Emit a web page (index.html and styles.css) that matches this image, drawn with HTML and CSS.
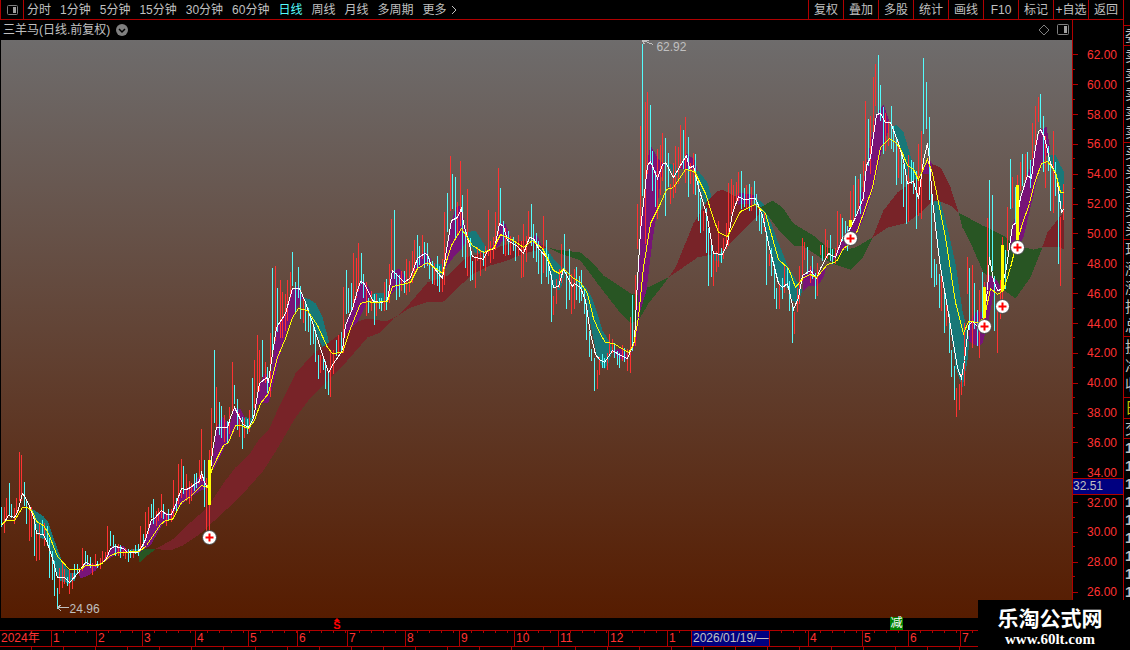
FILE: index.html
```html
<!DOCTYPE html>
<html lang="zh-CN">
    <head>
        <meta charset="utf-8">
        <title>三羊马 日线</title>
        <link rel="stylesheet" href="styles.css">
    </head>
    <body>
        <div class="main">
            <div class="workspace">
                <nav class="toolbar">
                    <button class="panel-toggle" aria-label="侧栏">
                        <svg width="13" height="12" viewBox="0 0 13 12"><rect x="1.5" y="1.5" width="10" height="9" rx="1" fill="none" stroke="#808080"/><rect x="7" y="3" width="3" height="6" fill="#a0a0a0"/></svg>
                    </button>
                    <div class="periods">
                        <button>分时</button>
                        <button>1分钟</button>
                        <button>5分钟</button>
                        <button>15分钟</button>
                        <button>30分钟</button>
                        <button>60分钟</button>
                        <button class="active">日线</button>
                        <button>周线</button>
                        <button>月线</button>
                        <button>多周期</button>
                        <button class="more">更多<svg width="6" height="10" viewBox="0 0 6 10"><path d="M1 1L5 5L1 9" fill="none" stroke="#c0c0c0"/></svg></button>
                    </div>
                    <div class="tools">
                        <button>复权</button>
                        <button>叠加</button>
                        <button>多股</button>
                        <button>统计</button>
                        <button>画线</button>
                        <button>F10</button>
                        <button>标记</button>
                        <button>+自选</button>
                        <button>返回</button>
                    </div>
                </nav>
                <div class="content">
                    <div class="chart">
                        <div class="chart-title">
                            <span>三羊马(日线.前复权)</span>
                            <button aria-label="展开">
                                <svg width="12" height="12" viewBox="0 0 12 12"><circle cx="6" cy="6" r="6" fill="#808080"/><path d="M3 5L6 8L9 5" fill="none" stroke="#000" stroke-width="1.5"/></svg>
                            </button>
                            <div class="chart-icons">
                                <button aria-label="标注">
                                    <svg width="12" height="12" viewBox="0 0 12 12"><path d="M6 1L11 6L6 11L1 6Z" fill="none" stroke="#808080"/></svg>
                                </button>
                                <button aria-label="右侧栏">
                                    <svg width="13" height="12" viewBox="0 0 13 12"><rect x="1.5" y="0.5" width="11" height="10" rx="1" fill="none" stroke="#808080"/><rect x="8" y="2" width="3" height="7" fill="#a0a0a0"/></svg>
                                </button>
                            </div>
                        </div>
                        <div class="plot">
                            <svg class="kline" viewBox="0.5 39.5 1071 578" preserveAspectRatio="none">
                                <!-- short trend, falling -->
                                <g class="teal">
                                    <path d="M31 508L43 516L48 522L54 540L62 562L70 572L77 572L74 580L68 583L60 580L56 575L49 548L46 540L39 537L34 522Z"/>
                                    <path d="M130 549L138 548V552H130ZM241 415L249 418L254 416L250 428L245 428Z"/>
                                    <path d="M303 297L309 299L315 303L322 317L329 343L322 347L313 325Z"/>
                                    <path d="M371 294L376 292L384 293L386 300L380 303L372 302Z"/>
                                    <path d="M430 264L440 263L444 266L442 275L434 268Z"/>
                                    <path d="M465 232L475 230L480 238L487 249L483 252L474 252L468 240Z"/>
                                    <path d="M536 243L546 248L553 258L560 266L565 268L562 283L559 290L552 287L546 260Z"/>
                                    <path d="M572 275L585 286L591 296L597 313L602 330L610 343L612 350L608 363L604 369L597 358L590 323L585 293Z"/>
                                    <path d="M668 163L674 165L679 172L674 177ZM696 168L707 182L712 200L707 210L700 190Z"/>
                                    <path d="M711 252L722 252L720 261L714 260Z"/>
                                    <path d="M756 198L763 203L767 213L777 240L788 267L802 290L797 305L792 300L787 285L780 290L767 240Z"/>
                                    <path d="M892 127L896 124L903 132L910 155L918 180L913 183L907 175L900 150Z"/>
                                    <path d="M1047 154L1055 154L1060 165L1063 170V202L1060 210L1055 173Z"/>
                                </g>
                                <!-- long trend band -->
                                <g class="green">
                                    <path d="M138 548H156L147 555L139 562Z"/>
                                    <path d="M547 247L555 249L580 252L593 263L603 275L630 293L638 295L647 287L668 277L660 288L648 303L638 320L630 323L618 310L597 283L580 260L560 253Z"/>
                                    <path d="M760 207L772 200L782 207L793 223L813 235L827 247L840 250L855 247L872 237L862 258L850 269L837 265L820 257L803 246L793 245L780 232L765 212Z"/>
                                    <path d="M958 212L982 225L1003 235L1015 245L1033 249L1042 247L1030 277L1015 298L1000 287L983 272L972 247L962 227Z"/>
                                </g>
                                <g class="maroon">
                                    <path d="M156 548L172 539L190 522L206 508L225 480L235 467L249 454L259 438L268 430L280 403L295 373L313 353L327 343L340 333L353 322L367 318L385 321L397 315L410 302L427 282L447 275L465 257L480 253L500 246L520 240L533 241L547 247L523 253L507 260L490 265L473 273L462 283L443 301L425 302L410 307L393 318L380 332L367 337L347 360L327 380L310 397L295 417L277 448L263 470L248 487L227 508L200 533L182 545L172 549L160 549Z"/>
                                    <path d="M668 277L675 267L693 223L707 200L716 191L722 189L737 197L747 203L760 207V212L740 233L720 252L697 257Z"/>
                                    <path d="M872 237L883 210L897 192L920 175L928 162L940 167L950 187L958 212L950 205L937 200L930 202L920 212L907 222L887 227Z"/>
                                    <path d="M1042 246L1047 232L1058 218L1063 212V249L1057 246Z"/>
                                </g>
                                <path class="teal" d="M933 200L940 202L947 227L955 263L962 310L969 340L967 360L962 387L955 367L948 313L940 267Z"/>
                                <!-- short trend, rising -->
                                <g class="purple">
                                    <path d="M78 572L85 562L95 564L101 562L95 570L88 575L80 578Z"/>
                                    <path d="M101 562L108 552L112 545L122 545L128 551L115 554L106 560Z"/>
                                    <path d="M138 553L145 540L152 518L161 510L170 514L178 495L185 488L192 485L201 472L209 487L200 490L186 500L176 508L170 519L162 524L150 545L144 548Z"/>
                                    <path d="M211 470L216 427L222 416L229 425L234 407L240 409L244 417L236 426L229 440L224 447L214 468Z"/>
                                    <path d="M253 420L259 383L265 372L270 381L276 327L285 313L292 288L298 285L303 297L295 310L288 325L282 345L275 375L268 402L262 402L257 404Z"/>
                                    <path d="M340 350L343 345L346 320L352 307L360 280L366 283L371 292L365 305L358 320L346 333Z"/>
                                    <path d="M386 298L391 271L399 268L402 272L407 280L403 283L395 290Z"/>
                                    <path d="M408 282L416 260L424 250L430 258V264L421 266L413 272Z"/>
                                    <path d="M444 268L450 225L455 207L460 205L464 222L467 237L462 247L455 254L446 266Z"/>
                                    <path d="M490 248L495 240L500 222L505 224L509 233L509 241L503 239L498 246ZM529 243L536 233L541 245Z"/>
                                    <path d="M612 350L620 348L628 355L625 360L617 357Z"/>
                                    <path d="M630 358L636 330L640 235L647 160L650 145L657 157L664 165L660 180L657 207L652 240L646 290L640 310L636 340L632 352Z"/>
                                    <path d="M680 168L686 153L695 160L697 170L688 168ZM736 197L738 192L756 195L750 203L738 204Z"/>
                                    <path d="M802 292L803 275L812 265L816 277L827 263L823 277L817 285L808 285Z"/>
                                    <path d="M830 262L842 237L857 213L865 170L875 115L883 104L888 118V130L882 147L873 187L865 213L855 237L840 253Z"/>
                                    <path d="M922 173L927 157L931 162L931 173Z"/>
                                    <path d="M968 340L969 322L977 310L983 313L987 273L997 280L1000 287L993 295L988 320L982 343L977 346L972 343Z"/>
                                    <path d="M1008 250L1013 222L1028 172L1033 153L1040 129L1046 126L1050 150L1045 157L1037 177L1030 207L1023 237L1017 247Z"/>
                                </g>
                                <path class="up" d="M4 506V532M6 497V517M14 507V523M16 497V513M19 451V500M21 454V500M29 506V540M31 506V536M36 530V560M39 523V559M44 522V545M59 567V593M62 560V587M64 568V583M69 568V593M72 572V588M79 567V573M82 547V570M92 562V574M95 553V566M100 557V568M102 550V563M105 551V560M107 525V557M118 543V555M123 549V555M125 547V558M133 548V557M140 525V547M145 511V540M148 506V533M156 510V525M158 507V520M161 493V517M166 512V525M171 508V521M173 479V517M178 463V503M181 458V497M186 473V500M189 480V503M191 482V500M199 459V483M201 428V480M206 477V530M209 449V530M211 407V460
                                    M216 386V427M224 414V441M229 406V433M232 361V413M239 412V436M244 417V437M249 409V431M254 359V407M257 334V393M259 349V390M265 361V382M270 332V396M275 265V340M280 279V337M282 291V337M285 293V330M287 279V320M290 271V297M303 297V322M320 354V372M330 349V396M333 349V373M338 334V353M343 286V352M353 252V307M356 257V297M358 242V290M366 281V315M371 290V310M376 293V315M384 281V310M389 263V302M391 218V270M401 270V290M406 258V294M409 260V291M412 250V282M414 239V273M422 234V258M434 262V284M442 258V291M444 211V284M450 155V210M457 201V233M460 160V225M467 188V275
                                    M475 255V287M477 246V260M480 250V275M485 245V270M488 209V255M490 240V262M493 236V258M495 211V249M498 167V233M505 227V255M510 235V254M518 234V255M521 240V277M523 223V276M526 235V261M528 210V240M543 215V272M553 295V314M556 278V303M559 268V287M561 243V282M571 273V313M574 268V308M597 369V388M599 356V374M607 352V369M609 333V353M612 338V352M622 344V360M627 348V370M630 316V372M635 274V345M637 203V248M640 125V227M645 101V243M647 91V173M657 148V218M660 144V194M662 132V180M670 183V203M673 162V197M675 145V192M678 146V183M680 124V167M685 116V182M690 162V183M693 152V193M703 210V230M713 250V285M716 250V271M718 220V266M723 237V258M726 222V248M728 182V245M731 178V213M733 184V210M736 181V203M738 171V200M746 184V207M751 186V210M764 212V230M769 253V265M779 282V308
                                    M784 265V292M794 311V333M797 287V311M799 265V303M802 237V280M804 241V259M810 265V282M817 262V295M820 244V254M825 228V257M827 239V258M835 247V263M837 210V252M840 213V243M850 190V220M853 184V220M858 178V210M863 160V200M865 100V170M870 115V173M873 76V137M875 63V105M885 112V150M888 120V145M898 140V177M908 154V221M918 143V215M921 130V218M941 274V310M946 303V325M956 387V416M959 383V409M961 373V394M964 322V385M967 256V293M972 264V347M979 289V357M984 281V320M987 217V287M997 300V352M1000 279V318M1002 236V300M1007 206V250M1012 176V207M1017 174V184M1020 161V190M1025 153V180M1032 122V158M1035 105V147M1038 96V121M1045 135V187M1053 130V212M1060 216V285M1063 183V219"/>
                                <path class="down" d="M1 506V526M9 482V515M11 503V517M24 481V505M26 500V523M34 515V555M42 519V533M47 525V545M49 537V577M52 550V579M54 560V595M57 587V608M67 576V585M74 563V578M77 563V572M85 550V563M87 554V564M90 556V567M97 560V567M110 530V545M113 534V547M115 543V555M120 544V557M128 548V561M130 549V557M135 544V553M138 543V555M143 533V545M151 503V517M153 498V523M163 503V518M168 508V520M176 497V510M183 465V493M194 473V490M196 472V487M204 459V506
                                    M214 349V422M219 401V434M221 405V437M227 420V442M234 384V403M237 398V429M242 416V448M247 418V433M252 377V417M262 339V376M267 366V392M272 267V353M277 287V331M292 251V285M295 281V313M298 266V297M300 285V318M305 300V330M308 307V331M310 315V344M313 323V343M315 333V361M318 354V378M323 356V369M325 360V388M328 370V394M336 339V355M341 331V352M346 269V313M348 287V312M351 282V310M361 252V283M363 273V297M368 297V312M374 293V324M379 297V308M381 297V310M386 278V309M394 209V278M396 272V299M399 274V296M404 270V292M417 234V267M419 245V264M424 241V267M427 242V265M429 257V278M432 260V283M437 255V285M439 265V291M447 192V231M452 173V208M455 176V238M462 194V256M465 228V267
                                    M470 237V280M472 260V279M483 250V265M500 187V223M503 220V253M508 230V254M513 236V250M515 240V260M531 203V245M533 223V257M536 232V261M538 240V273M541 252V283M546 239V276M548 253V283M551 273V321M564 233V272M566 270V308M569 248V299M576 266V299M579 275V302M581 269V300M584 287V313M586 302V339M589 330V356M591 348V360M594 357V390M602 353V367M604 357V367M614 342V357M617 350V364M619 352V367M624 347V361M632 294V350M642 43V195M650 104V163M652 150V190M655 170V206M665 137V215M668 152V186M683 129V168M688 136V196M695 153V194M698 180V220M700 197V232M706 207V252M708 227V285M711 243V276M721 247V262M741 170V208M744 187V206M749 183V210M754 180V203M756 193V220M759 207V230M761 212V233M766 230V284M771 247V275M774 263V298M776 287V308
                                    M782 277V298M787 267V287M789 280V310M792 303V342M807 246V273M812 255V278M815 272V298M822 244V260M830 234V260M832 248V263M842 217V240M845 220V233M847 225V250M855 175V215M860 173V213M868 118V165M878 54V112M880 84V120M883 106V153M891 105V148M893 125V151M896 137V184M901 150V183M903 163V206M906 180V223M911 159V183M913 161V193M916 170V228M923 57V133M926 81V128M929 116V199M931 192V277M934 258V286M936 263V284M939 273V307M944 293V332M949 313V352M951 349V376M954 365V399M969 267V329M974 282V328M977 309V345M982 271V317M989 179V263M992 194V270M994 275V330M1005 249V288M1010 158V208M1015 186V223M1022 153V185M1027 151V175M1030 159V187M1040 93V127M1043 115V171M1048 145V170M1050 160V210M1055 161V195M1058 187V263"/>
                                <polyline class="fast" points="1,525 5,520 8,515 14,517 17,512 22,493 25,497 30,508 34,520 36,533 43,534 47,543 52,558 57,577 64,577 69,582 78,572 85,562 92,565 100,564 106,558 110,548 115,546 123,548 127,552 137,552 141,547 145,539 151,519 154,518 161,510 166,514 171,514 176,502 181,488 186,489 190,487 195,483 199,481 201,472 204,482 207,487 209,481 212,450 216,427 227,427 230,417 234,407 239,417 243,424 248,427 253,418 259,383 266,377 268,381 272,353 276,327 285,313 292,288 299,288 305,302 313,325 320,348 328,372 333,363 342,350 345,325 352,308 357,290 360,281 363,282 373,301 381,302 387,300 392,270 397,275 404,282 410,277 417,258 424,253 427,254 430,263 442,278 444,263 447,243 451,220 457,217 461,208 463,223 467,237 472,256 483,259 487,250 494,248 499,223 503,226 507,240 517,246 523,253 529,237 533,238 538,248 547,258 553,287 558,286 563,269 572,286 574,283 580,287 585,300 590,333 595,354 599,359 604,362 612,350 620,355 627,358 634,340 637,280 640,230 644,193 647,165 650,161 657,178 662,164 665,162 673,177 680,165 686,155 689,168 693,165 697,183 707,217 713,253 722,254 727,243 732,213 738,196 743,199 755,198 762,215 768,243 778,283 782,287 787,283 793,309 798,297 802,275 810,270 816,278 820,268 828,253 835,257 842,237 847,233 855,217 863,197 866,165 870,157 873,135 876,114 880,113 885,122 890,122 897,140 903,160 907,183 913,181 918,198 923,160 927,143 929,160 932,200 939,260 944,290 950,325 957,367 961,378 964,360 968,325 972,321 978,327 982,324 987,290 989,257 993,280 997,290 1001,289 1006,267 1012,225 1016,222 1020,197 1027,175 1031,178 1034,153 1038,131 1040,129 1044,137 1050,163 1056,175 1061,212 1063,209"/>
                                <polyline class="slow" points="1,524 6,520 14,520 22,507 27,507 32,511 36,521 43,525 48,533 57,556 69,569 80,569 85,565 97,565 103,562 110,555 118,552 139,551 146,545 160,524 165,520 172,519 181,502 190,496 201,485 207,487 211,470 217,457 223,445 228,442 235,425 240,425 248,428 254,420 260,403 268,393 277,357 285,338 292,317 298,308 307,310 317,325 327,347 332,353 342,352 350,328 360,303 367,301 373,302 387,301 392,286 410,282 417,268 427,262 442,273 451,245 461,228 472,245 483,252 493,248 500,234 513,240 523,247 532,240 542,248 553,270 559,273 563,268 572,277 580,282 587,293 593,318 599,332 605,342 613,343 628,352 633,345 638,317 643,267 650,223 660,203 666,189 673,187 685,169 694,171 705,193 712,215 718,232 727,236 740,211 755,204 765,213 778,259 788,268 795,287 803,277 810,274 816,277 827,264 836,261 843,248 850,243 857,230 865,207 872,187 880,147 889,138 895,142 900,148 907,165 913,169 918,179 927,159 932,173 937,197 945,237 955,302 963,333 968,321 978,322 984,317 990,288 997,294 1003,290 1010,267 1016,243 1022,223 1029,203 1034,183 1041,163 1047,161 1055,172 1060,192 1063,192"/>
                                <path class="breakout" d="M209 459V504M850 219V226M984 286V317M1002 244V290M1017 184V242"/>
                                <g class="buys">
                                    <g transform="translate(209 537)"><circle r="7"/><path d="M-4 0H4M0 -4V4"/></g>
                                    <g transform="translate(850 238)"><circle r="7"/><path d="M-4 0H4M0 -4V4"/></g>
                                    <g transform="translate(984 326)"><circle r="7"/><path d="M-4 0H4M0 -4V4"/></g>
                                    <g transform="translate(1002 306)"><circle r="7"/><path d="M-4 0H4M0 -4V4"/></g>
                                    <g transform="translate(1017 247)"><circle r="7"/><path d="M-4 0H4M0 -4V4"/></g>
                                </g>
                                <path class="arrow" d="M57 607H68M61 604L57 607L61 611M642 40L653 44M648 40H642L644 44"/>
                            </svg>
                            <span class="extreme high">62.92</span>
                            <span class="extreme low">24.96</span>
                        </div>
                    </div>
                    <div class="scale">
                        <div class="scale-rows">
                            <span>62.00</span>
                            <span>60.00</span>
                            <span>58.00</span>
                            <span>56.00</span>
                            <span>54.00</span>
                            <span>52.00</span>
                            <span>50.00</span>
                            <span>48.00</span>
                            <span>46.00</span>
                            <span>44.00</span>
                            <span>42.00</span>
                            <span>40.00</span>
                            <span>38.00</span>
                            <span>36.00</span>
                            <span>34.00</span>
                            <span>32.00</span>
                            <span>30.00</span>
                            <span>28.00</span>
                            <span>26.00</span>
                        </div>
                        <div class="cursor-price">32.51</div>
                    </div>
                </div>
            </div>
            <aside class="quotes">
                <div class="group ratio"><span>委</span></div>
                <div class="group"><span>卖</span><span>卖</span><span>卖</span><span>卖</span><span>卖</span></div>
                <div class="group"><span>买</span><span>买</span><span>买</span><span>买</span><span>买</span></div>
                <div class="group"><span>现</span><span>涨</span><span>涨</span><span>振</span><span>总</span></div>
                <div class="group"><span>换</span><span>净</span><span>收</span></div>
                <div class="group yellow"><span>日</span></div>
                <div class="group"><span>交</span></div>
                <div class="group ticks"><span>1</span><span>1</span><span>1</span><span>1</span><span>1</span><span>1</span><span>1</span><span>1</span><span>1</span></div>
            </aside>
        </div>
        <div class="signals">
            <span class="sell">S</span>
            <span class="reduce">减</span>
        </div>
        <div class="timeline">
            <span>2024年</span>
            <span>1</span>
            <span>2</span>
            <span>3</span>
            <span>4</span>
            <span>5</span>
            <span>6</span>
            <span>7</span>
            <span>8</span>
            <span>9</span>
            <span>10</span>
            <span>11</span>
            <span>12</span>
            <span>1</span>
            <span class="cursor-date">2026/01/19/—</span>
            <span></span>
            <span>4</span>
            <span>5</span>
            <span>6</span>
            <span>7</span>
        </div>
        <div class="tabs"></div>
        <div class="brand">
            <strong>乐淘公式网</strong>
            <b>www.60lt.com</b>
        </div>
    </body>
</html>
```
FILE: styles.css
```css
*{
    box-sizing: border-box;
}
body{
    margin: 0;
    height: 100vh;
    overflow: hidden;
    display: flex;
    flex-direction: column;
    position: relative;
    background-color: black;
    color: #c0c0c0;
    font-family: "Liberation Sans", "Noto Sans CJK SC", sans-serif;
    font-size: 12px;
    line-height: 14px;
}
button{
    display: flex;
    align-items: center;
    justify-content: center;
    padding: 0;
    border: 0;
    background: none;
    color: inherit;
    font: inherit;
    white-space: nowrap;
}
.main{
    flex: 1;
    min-height: 0;
    display: flex;
}
.workspace{
    flex: 1;
    min-width: 0;
    display: flex;
    flex-direction: column;
}

/* top bar */
.toolbar{
    height: 20px;
    display: flex;
    border-bottom: 1px solid #b00000;
}
.panel-toggle{
    width: 24px;
    border-left: 1px solid #b00000;
    border-right: 1px solid #b00000;
}
.periods{
    flex: 1;
    display: flex;
    gap: 9px;
    padding-left: 3px;
}
.periods .active{
    color: #54fcfc;
}
.more{
    gap: 4px;
}
.tools{
    display: flex;
}
.tools button{
    width: 35px;
    border-left: 1px solid #b00000;
}

/* chart */
.content{
    flex: 1;
    min-height: 0;
    display: flex;
}
.chart{
    flex: 1;
    min-width: 0;
    display: flex;
    flex-direction: column;
}
.chart-title{
    height: 20px;
    display: flex;
    align-items: center;
    gap: 6px;
    padding: 0 3px;
}
.chart-icons{
    display: flex;
    gap: 6px;
    margin-left: auto;
}
.plot{
    flex: 1;
    min-height: 0;
    position: relative;
    margin-left: 1px;
    background: linear-gradient(#6e6c6c, #561c00);
}
.kline{
    display: block;
    width: 100%;
    height: 100%;
    shape-rendering: crispEdges;
}
.teal{
    fill: #187878;
}
.green{
    fill: #285523;
}
.maroon{
    fill: #782328;
}
.purple{
    fill: #781478;
}
.up, .down, .fast, .slow, .arrow, .breakout{
    fill: none;
    stroke-width: 1;
}
.up{
    stroke: #ff3232;
}
.down{
    stroke: #54fcfc;
}
.fast{
    stroke: white;
}
.slow{
    stroke: yellow;
}
.arrow{
    stroke: #c0c0c0;
}
.breakout{
    stroke: yellow;
    stroke-width: 3;
}
.buys{
    shape-rendering: auto;
    stroke-width: 2;
    stroke: red;
}
.buys circle{
    fill: white;
    stroke: #404040;
    stroke-width: 1;
}
.extreme{
    position: absolute;
}
.high{
    left: 61.2%;
    top: 0;
}
.low{
    left: 6.4%;
    bottom: 2px;
}

/* price axis */
.scale{
    width: 51px;
    position: relative;
    padding-top: 20px;
    border-left: 1px solid #b00000;
    color: #ff3232;
}
.scale-rows{
    height: 100%;
    display: flex;
    flex-direction: column;
    padding-bottom: 11px;
}
.scale-rows span{
    flex: 1;
    display: flex;
    align-items: center;
    padding-left: 14px;
    background:
        linear-gradient(#b00000, #b00000) 0 50% / 5px 1px no-repeat,
        linear-gradient(#b00000, #b00000) 0 100% / 2px 1px no-repeat;
}
.cursor-price{
    position: absolute;
    top: 76.6%;
    left: 0;
    right: 0;
    border-top: 1px solid #b00000;
    border-bottom: 1px solid #b00000;
    background-color: #000080;
    color: #c0c0c0;
    line-height: 15px;
}

/* quote panel */
.quotes{
    width: 7px;
    overflow: hidden;
    padding-top: 25px;
    border-left: 1px solid #b00000;
}
.group{
    width: 100px;
    display: flex;
    flex-direction: column;
    padding: 0 1px;
    border-top: 1px solid #b00000;
    font-size: 15px;
}
.group span{
    height: 19px;
    line-height: 19px;
}
.group:nth-child(n+2):nth-child(-n+4){
    padding-bottom: 1px;
}
.group:nth-child(5){
    padding-bottom: 3px;
}
.yellow{
    color: #c0c000;
    padding-bottom: 1px;
}
.group.ticks span{
    height: 18px;
    line-height: 18px;
    font-weight: bold;
}

/* bottom */
.signals{
    height: 12px;
    position: relative;
}
.sell{
    position: absolute;
    left: 29.5%;
    top: 1px;
    color: red;
    font-size: 11px;
    font-weight: bold;
    line-height: 12px;
}
.sell::before{
    content: "";
    position: absolute;
    left: 1px;
    top: -1px;
    border: 3px solid transparent;
    border-top: 0;
    border-bottom-color: red;
}
.reduce{
    position: absolute;
    left: 78.8%;
    top: -1px;
    width: 13px;
    height: 13px;
    background-color: #008000;
    color: white;
    line-height: 13px;
}
.timeline{
    display: grid;
    grid-template-columns: 51fr 45fr 46fr 53fr 53fr 49fr 50fr 58fr 54fr 55fr 44fr 50fr 59fr 24fr 78fr 39fr 54fr 46fr 52fr 170fr;
    height: 17px;
    border-top: 1px solid #b00000;
    border-bottom: 1px solid #b00000;
    color: #ff3232;
    line-height: 15px;
}
.timeline span{
    min-width: 0;
    padding-left: 1px;
    border-left: 1px solid #b00000;
    white-space: nowrap;
    background: repeating-linear-gradient(90deg, transparent 0 11px, #b00000 11px 12px) 0 0 / 100% 2px no-repeat;
}
.timeline span:first-child{
    border-left: 0;
    background: none;
}
.timeline .cursor-date{
    background: #000080;
    color: #c0c0c0;
}
.tabs{
    height: 3px;
    background: repeating-linear-gradient(90deg, transparent 0 31px, #b00000 31px 32px);
}
.brand{
    position: absolute;
    right: 0;
    bottom: 0;
    width: 152px;
    height: 50px;
    padding: 6px 8px 0 0;
    background-color: black;
    color: white;
    display: flex;
    flex-direction: column;
    align-items: center;
}
.brand strong{
    font-size: 21px;
    font-weight: 700;
    line-height: 26px;
}
.brand b{
    font-family: "Liberation Serif", serif;
    font-size: 15px;
    line-height: 15px;
}
```
